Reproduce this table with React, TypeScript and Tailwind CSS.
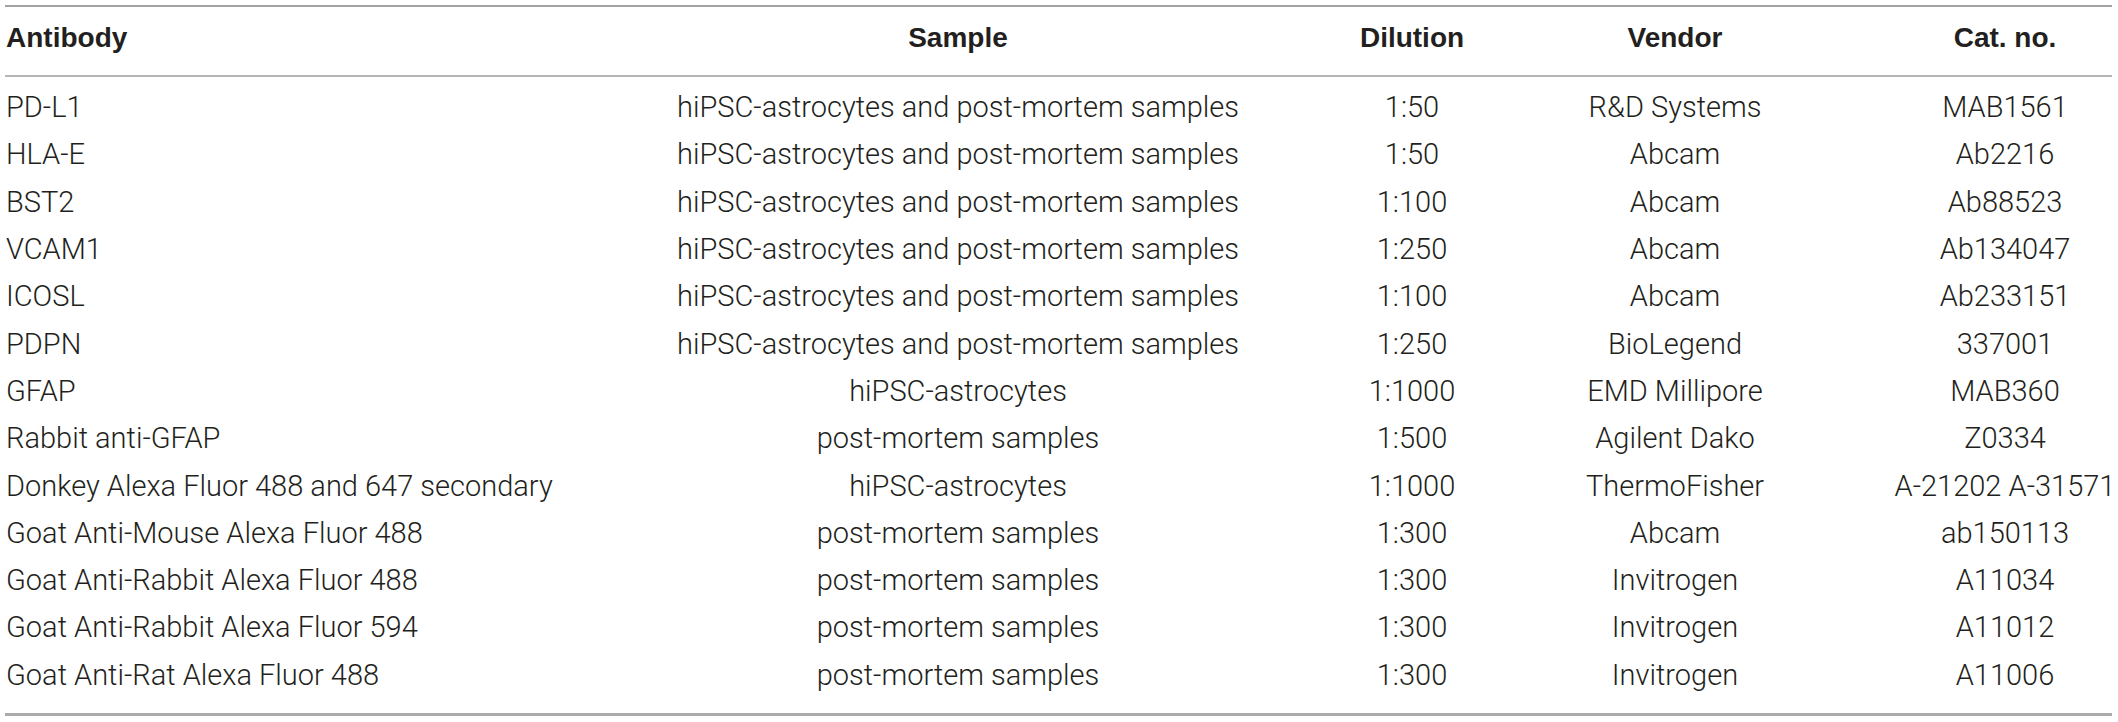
import React from "react";

const rows: [string, string, string, string, string][] = [
  ["PD-L1", "hiPSC-astrocytes and post-mortem samples", "1:50", "R&D Systems", "MAB1561"],
  ["HLA-E", "hiPSC-astrocytes and post-mortem samples", "1:50", "Abcam", "Ab2216"],
  ["BST2", "hiPSC-astrocytes and post-mortem samples", "1:100", "Abcam", "Ab88523"],
  ["VCAM1", "hiPSC-astrocytes and post-mortem samples", "1:250", "Abcam", "Ab134047"],
  ["ICOSL", "hiPSC-astrocytes and post-mortem samples", "1:100", "Abcam", "Ab233151"],
  ["PDPN", "hiPSC-astrocytes and post-mortem samples", "1:250", "BioLegend", "337001"],
  ["GFAP", "hiPSC-astrocytes", "1:1000", "EMD Millipore", "MAB360"],
  ["Rabbit anti-GFAP", "post-mortem samples", "1:500", "Agilent Dako", "Z0334"],
  ["Donkey Alexa Fluor 488 and 647 secondary", "hiPSC-astrocytes", "1:1000", "ThermoFisher", "A-21202 A-31571"],
  ["Goat Anti-Mouse Alexa Fluor 488", "post-mortem samples", "1:300", "Abcam", "ab150113"],
  ["Goat Anti-Rabbit Alexa Fluor 488", "post-mortem samples", "1:300", "Invitrogen", "A11034"],
  ["Goat Anti-Rabbit Alexa Fluor 594", "post-mortem samples", "1:300", "Invitrogen", "A11012"],
  ["Goat Anti-Rat Alexa Fluor 488", "post-mortem samples", "1:300", "Invitrogen", "A11006"],
];

const gridCols = "grid grid-cols-[539px_828px_80px_446px_214px]";

function Row({ cells }: { cells: string[] }) {
  return (
    <div className={`${gridCols} h-full items-center`}>
      <div className="flex justify-start whitespace-nowrap pl-[1px]">{cells[0]}</div>
      <div className="flex justify-center whitespace-nowrap">{cells[1]}</div>
      <div className="flex justify-center whitespace-nowrap">{cells[2]}</div>
      <div className="flex justify-center whitespace-nowrap">{cells[3]}</div>
      <div className="flex justify-center whitespace-nowrap">{cells[4]}</div>
    </div>
  );
}

export default function App() {
  return (
    <div className="w-[2118px] h-[722px] bg-white pl-[5px] pr-[6px] pt-[5px] leading-none text-[#231f20]">
      <div className="border-t-2 border-[#a3a3a3]">
        <div
          className="h-[70px] pb-[6px] text-[28px] font-bold border-b-2 border-[#b5b5b5]"
          style={{ fontFamily: '"Liberation Sans", Arial, sans-serif' }}
        >
          <Row cells={["Antibody", "Sample", "Dilution", "Vendor", "Cat. no."]} />
        </div>
        <div
          className="pt-[7px] pb-[14px] text-[29px] font-light border-b-[3px] border-[#ababab]"
          style={{ fontFamily: 'Roboto, "Liberation Sans", Arial, sans-serif' }}
        >
          {rows.map((r, i) => (
            <div key={i} className="h-[47.3px]">
              <Row cells={r} />
            </div>
          ))}
        </div>
      </div>
    </div>
  );
}
